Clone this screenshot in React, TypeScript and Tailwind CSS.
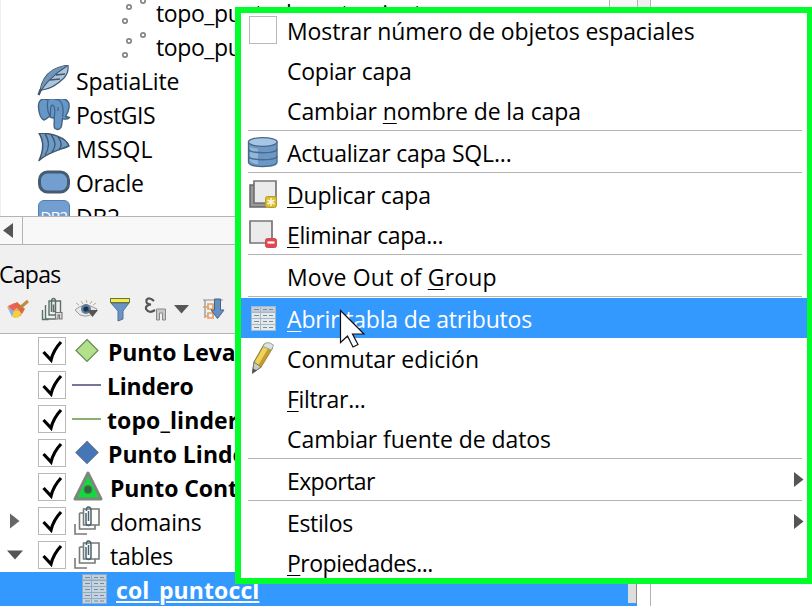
import React from "react";

const F = "font-['Open_Sans','Noto_Sans',sans-serif]";

function DotsIcon() {
  return (
    <svg className="h-[34px] w-[34px]" viewBox="0 0 34 34" fill="#fff" stroke="#858585" strokeWidth="1.7">
      <circle cx="9" cy="10" r="2.2" />
      <circle cx="23" cy="4" r="2.2" />
      <circle cx="5" cy="24" r="2.2" />
    </svg>
  );
}

function FeatherIcon() {
  return (
    <svg className="h-[34px] w-[34px]" viewBox="37 65 34 34">
      <path d="M40 91C41 83 45 75 53 70C58 67 63 66 68 65C68.500 70 68 74 64 78C58 84 50 89 42 90Z" fill="#a9c6e0" stroke="#46576b" strokeWidth="1.200" />
      <path d="M41 89C47 80 57 72 67 65.500C62 66 57 68 53 70C46 75 42 82 41 89Z" fill="#7095ba" />
      <path d="M39 95C42 86 54 74 67 66M50 80l10-1M56 75l9-1" fill="none" stroke="#42566c" strokeWidth="1.300" />
      <path d="M38.500 95L40.500 89.500" stroke="#42566c" strokeWidth="2.200" />
    </svg>
  );
}

function ElephantIcon() {
  return (
    <svg className="h-[34px] w-[34px]" viewBox="37 99 34 34" fill="#6597c9" stroke="#42617f" strokeWidth="1.400" strokeLinejoin="round">
      <path d="M47 99.500C41 98 38 101 38.500 107C39 114 41 119 44 120C46 120 48 117 50 116C50 118 53 118 54 118C55 122 53 127 55 128.500C58 130.500 61 129 61.500 126L62.500 118.500C65 119.500 68 119 69.500 117.500L65.500 116.500C69 111 70.500 104 67.500 101C65 98 60 98 57 99.500C54 98.500 50 98.500 47 99.500Z" />
      <path d="M48 100C47 105 47 111 50 116M51 106C54 103 56 109 54 118M58 99.500C63 102 64 111 62.500 117M58 107v4M50 116C51 114 50 110 51 106" fill="none" strokeWidth="1.200" />
    </svg>
  );
}

function SailIcon() {
  return (
    <svg className="h-[34px] w-[34px]" viewBox="37 133 34 34">
      <path d="M39 133C51 133 66 137 69 146C60 150 48 152 39 160.500C44 150 44 141 39 133Z" fill="#6d9bc7" stroke="#42566b" strokeWidth="1.500" strokeLinejoin="round" />
      <path d="M45 134C50 141 49 149 45 155M51 134.500C56 141 56 147 52 152M58 137C62 142 62 146 59 149.500" fill="none" stroke="#42566b" strokeWidth="1.300" />
    </svg>
  );
}

function OracleIcon() {
  return (
    <svg className="h-[34px] w-[34px]" viewBox="0 0 34 34">
      <rect x="2.500" y="5" width="29" height="20" rx="8" fill="#729fcf" stroke="#475b70" strokeWidth="3" />
    </svg>
  );
}

function Db2Icon() {
  return (
    <span className="mb-[4px] ml-[1px] mr-[1px] flex h-[32px] w-[32px] items-start justify-center rounded-[6px] border border-[#507fae] bg-[#729fcf] pt-[7px] font-['Open_Sans',sans-serif] text-[15px] leading-[16px] tracking-[-0.8px] text-white">
      DB2
    </span>
  );
}

function TreeRow({ icon, label, cls }: { icon: React.ReactNode; label: string; cls: string }) {
  return (
    <div className="flex h-[34px] shrink-0 items-center">
      <span className="ml-[37px] flex w-[39px] shrink-0">{icon}</span>
      <span className={`-mt-[2px] whitespace-nowrap leading-[34px] ${cls}`}>{label}</span>
    </div>
  );
}

function BrowserTree() {
  return (
    <div className="h-[216px] overflow-hidden border-l border-[#f0f0f0] bg-white">
      <div className="-mt-[3px] -ml-px flex flex-col text-[23px]">
        {["topo_punto_levantamiento", "topo_punto_lindero"].map((t) => (
          <div key={t} className="flex h-[34px] shrink-0 items-center">
            <span className="ml-[120px] flex w-[36px] shrink-0"><DotsIcon /></span>
            <span className="-mt-[2px] whitespace-nowrap tracking-[-0.4px] leading-[34px]">{t}</span>
          </div>
        ))}
        <TreeRow icon={<FeatherIcon />} label="SpatiaLite" cls="tracking-[-0.2px]" />
        <TreeRow icon={<ElephantIcon />} label="PostGIS" cls="tracking-[-0.5px]" />
        <TreeRow icon={<SailIcon />} label="MSSQL" cls="tracking-[0.2px]" />
        <TreeRow icon={<OracleIcon />} label="Oracle" cls="tracking-[-0.4px]" />
        <TreeRow icon={<Db2Icon />} label="DB2" cls="tracking-[-0.3px]" />
      </div>
    </div>
  );
}

function HScroll() {
  return (
    <div className="flex h-[29px] border-y border-[#b4b4b4] bg-[#f8f8f8]">
      <div className="flex w-[23px] items-center border-r border-[#b4b4b4]">
        <svg className="ml-[3px] h-[16px] w-[10px]" viewBox="0 0 10 16"><path d="M10 0v15L0 7.500z" fill="#555" /></svg>
      </div>
    </div>
  );
}

function Toolbar() {
  return (
    <svg className="block h-[43px] w-[235px]" viewBox="0 290 235 43" fill="none">
      <path d="M7 307L14 303L23 309L21 316L14 318Z" fill="#efab65" />
      <path d="M8 306L15 303L19 306L13 311Z" fill="#ee5f62" />
      <path d="M8 308L14 311L12 317Z" fill="#7fb4e6" />
      <path d="M14 311L22 311L18 318L12 317Z" fill="#f1d13d" />
      <path d="M14 304L17 302L25 309L22 314Z" fill="#d96a45" />
      <path d="M21 307L28 301" stroke="#bf8b40" strokeWidth="3" />
      <g stroke="#5d7067" strokeWidth="1.400">
        <path d="M49 301h11.500v14H49zM45.500 305v14h10M42.500 310v9.500h6" />
        <path d="M51.500 312v-10.500q0-3 2-3t2 3v10h-2v-7" strokeWidth="1.500" />
        <path d="M55.500 319v-6.500h6.500v6.500h-2.500v-4h-1.500v4z" fill="#ddd" stroke="#777" strokeWidth="1.100" />
      </g>
      <path d="M75 310Q84 301 97 309Q90 319 80 315Z" fill="#e4e8eb" stroke="#a69a90" />
      <path d="M76 303l3 2m2-4l2 3m3-4l1 3m5-2l-2 3m6-1l-3 2" stroke="#bba99a" />
      <circle cx="86" cy="309" r="5" fill="#607d97" />
      <circle cx="86" cy="309" r="2.600" fill="#17334f" />
      <path d="M87 310h11l-5.500 7z" fill="#555" />
      <path d="M111 303h18l-6 8v8l-5 2v-10z" fill="#6b94c4" stroke="#4c719c" />
      <rect x="110.500" y="298.500" width="19" height="4" fill="#f2ed42" stroke="#6e713b" />
      <path d="M154 301Q149 296.500 146.500 300Q145.500 304.500 151 304.500Q145 305.500 146 309Q149 314 155 310" stroke="#555" strokeWidth="2.200" />
      <path d="M156.500 320v-11h9v11h-3v-7h-3v7z" fill="#c8c8c8" stroke="#888" />
      <path d="M174 305h15l-7.500 8.500z" fill="#555" />
      <path d="M203 300h20M205 300v18" stroke="#858f9a" strokeWidth="1.200" />
      <path d="M203 307h5M208 304h5v5h-5zM204 316h4M208 313h5v5h-5z" stroke="#e6a061" strokeWidth="1.700" />
      <path d="M214.500 299h6v11h3.500l-6.500 8.500-6.500-8.500h3.500z" fill="#648fbe" stroke="#41648d" />
    </svg>
  );
}

function Check() {
  return (
    <span className="flex h-[28px] w-[28px] shrink-0 border border-[#b9b9b9] bg-white">
      <svg className="h-[26px] w-[26px]" viewBox="0 0 26 26"><path d="M4.500 14L12 22Q14.500 12 22 4" fill="none" stroke="#000" strokeWidth="3.200" /></svg>
    </span>
  );
}

function GroupIcon() {
  return (
    <svg className="h-[34px] w-[34px]" viewBox="73 504 34 34" fill="none" stroke="#747b78" strokeWidth="1.600">
      <path d="M83.500 509H99v16H83.500zM79.500 513v16H95v-4M79.500 513h4M75 524v10h12" />
      <path d="M86 513v10q0 2.500 2.500 2.500t2.500-2.500v-12q0-4-2.500-4T86.500 511M88.500 511v10" stroke="#49636c" strokeWidth="1.500" />
    </svg>
  );
}

function TableIcon({ sel }: { sel?: boolean }) {
  return (
    <svg className="block h-[30px] w-[25px] shrink-0" viewBox="0 0 25 30">
      <rect x="0" y="0" width="25" height="30" fill={sel ? "#8fabc6" : "#a3b9cc"} />
      <path d="M1 1h8v4.500H1zM10 1h14v4.500H10z" fill="#c3d0dc" />
      <path d="M1 7h8v5H1zM10 7h14v5H10zM1 13h8v5H1zM10 13h14v5H10zM1 19h8v5H1zM10 19h14v5H10zM1 25h8v4H1zM10 25h14v4H10z" fill={sel ? "#c6d4df" : "#e6e9eb"} />
      <path d="M3 3.500h5M12 3.500h4M18 3.500h4M3 9.500h5M12 9.500h4M18 9.500h4M3 15.500h5M12 15.500h4M18 15.500h4M3 21.500h5M12 21.500h4M18 21.500h4M3 27h5M12 27h4M18 27h4" stroke="#7d8b98" strokeWidth="1.100" />
    </svg>
  );
}

function Diamond({ fill, stroke }: { fill: string; stroke: string }) {
  return (
    <svg className="h-[34px] w-[34px]" viewBox="0 0 34 34"><path d="M14 5.500L25 16.500L14 27.500L3 16.500Z" fill={fill} stroke={stroke} strokeWidth="1.200" /></svg>
  );
}

function Line({ color }: { color: string }) {
  return <span className={`mb-[1px] ml-[-1px] h-[2px] w-[29px] ${color}`} />;
}

function LayerRow({ arrow, icon, label, cls }: { arrow?: "right" | "down"; icon: React.ReactNode; label: string; cls: string }) {
  return (
    <div className="flex h-[34px] shrink-0 items-center">
      <span className="flex w-[38px] shrink-0 pl-[7px]">
        {arrow === "right" && <svg className="ml-[3px] h-[16px] w-[10px]" viewBox="0 0 10 16"><path d="M0 0.500v15L9.500 8z" fill="#666" /></svg>}
        {arrow === "down" && <svg className="h-[10px] w-[16px]" viewBox="0 0 16 10"><path d="M0 0.500h16L8 9.500z" fill="#555" /></svg>}
      </span>
      <Check />
      <span className="ml-[7px] flex w-[34px] shrink-0 items-center">{icon}</span>
      <span className={`mt-[2px] whitespace-nowrap leading-[34px] ${cls}`}>{label}</span>
    </div>
  );
}

function Layers() {
  return (
    <div className="flex h-[273px] flex-col overflow-hidden border-t border-[#b4b4b4] bg-white text-[23px]">
      <LayerRow icon={<Diamond fill="#b4df8b" stroke="#668a57" />} label="Punto Levantamiento" cls="ml-[1px] font-bold tracking-[-0.1px]" />
      <LayerRow icon={<Line color="bg-[#77759a]" />} label="Lindero" cls="font-bold tracking-[-0.2px]" />
      <LayerRow icon={<Line color="bg-[#8caf70]" />} label="topo_lindero" cls="font-bold tracking-[0.1px]" />
      <LayerRow icon={<Diamond fill="#4476b8" stroke="#526f98" />} label="Punto Lindero" cls="ml-[1px] font-bold" />
      <LayerRow
        icon={<svg className="h-[34px] w-[34px]" viewBox="0 0 34 34"><path d="M15 3L28 29H2Z" fill="#10db3b" stroke="#7f857f" strokeWidth="3" strokeLinejoin="round" /><circle cx="15" cy="19.500" r="4" fill="#296b37" stroke="#5a7461" /></svg>}
        label="Punto Control"
        cls="ml-[3px] font-bold tracking-[-0.1px]"
      />
      <LayerRow arrow="right" icon={<GroupIcon />} label="domains" cls="ml-[3px] tracking-[-0.2px]" />
      <LayerRow arrow="down" icon={<GroupIcon />} label="tables" cls="ml-[3px] tracking-[-0.3px]" />
      <div className="mr-[13px] flex h-[34px] shrink-0 items-center bg-[#3399ff]">
        <span className="ml-[82px] flex w-[34px]"><TableIcon sel /></span>
        <span className="mt-[2px] whitespace-nowrap font-bold leading-[34px] tracking-[0.1px] text-white underline decoration-2 underline-offset-[2px]">col_puntoccl</span>
      </div>
    </div>
  );
}

function DbIcon() {
  return (
    <svg className="h-[40px] w-[32px]" viewBox="247 132 32 40" stroke="#4b6885" strokeWidth="1.300">
      <path d="M248.500 142v20c0 6 28.500 6 28.500 0v-20z" fill="#6b98c7" />
      <path d="M250 147v14c2 2 5 3 8 3v-15z" fill="#91b6dc" stroke="none" />
      <ellipse cx="262.750" cy="142" rx="14.250" ry="4.300" fill="#a5c6e7" />
      <path d="M248.500 149c0 5 28.500 5 28.500 0M248.500 156c0 5 28.500 5 28.500 0" fill="none" />
    </svg>
  );
}

function DuplicateIcon() {
  return (
    <svg className="h-[40px] w-[32px]" viewBox="247 174 32 40">
      <path d="M250 185h4v18h12v4h-16z" fill="#999" stroke="#666" strokeWidth="1.500" />
      <path d="M254 181h22v22h-22z" fill="#ebebeb" stroke="#777" strokeWidth="1.700" />
      <rect x="265.500" y="196.500" width="11" height="11" rx="2" fill="#d9bd37" stroke="#b89c24" />
      <path d="M271 198v8M267.500 200l7 4M274.500 200l-7 4" stroke="#fff8cf" strokeWidth="1.500" />
    </svg>
  );
}

function RemoveIcon() {
  return (
    <svg className="h-[40px] w-[32px]" viewBox="247 214 32 40">
      <path d="M250 221h22v22h-22z" fill="#ebebeb" stroke="#777" strokeWidth="1.700" />
      <rect x="265.500" y="238.500" width="11" height="9" rx="2" fill="#e4484d" stroke="#c94c50" />
      <path d="M267.500 242.500h7" stroke="#fff" strokeWidth="2.200" />
    </svg>
  );
}

function PencilIcon() {
  return (
    <svg className="h-[40px] w-[32px]" viewBox="247 338 32 40" strokeLinejoin="round">
      <path d="M264 344.500L272.500 348L261 367L252.500 373L254 362Z" fill="#edd35c" stroke="#8b793c" strokeWidth="1.100" />
      <path d="M269 347L272.500 348L261 367L258 365.500Z" fill="#c49c2c" />
      <path d="M265 343Q270 341.500 273.500 345L271.500 350L263 346.500Z" fill="#dbe3db" stroke="#9aa69a" />
      <path d="M254 362L261 367L252.500 373Z" fill="#cfc9ba" stroke="#777" />
      <path d="M253 368.500L257 370.500L252 373.500Z" fill="#555" />
    </svg>
  );
}

type Item = { pre?: string; u?: string; post: string; icon?: React.ReactNode; cls: string; hot?: boolean; sub?: boolean; sep?: boolean };

const items: Item[] = [
  { post: "Mostrar número de objetos espaciales", cls: "tracking-[-0.11px]", icon: <span className="ml-[2px] h-[28px] w-[28px] border border-[#b9b9b9]" /> },
  { post: "Copiar capa", cls: "tracking-[-0.23px]" },
  { pre: "Cambiar ", u: "n", post: "ombre de la capa", cls: "tracking-[-0.1px]", sep: true },
  { post: "Actualizar capa SQL...", cls: "tracking-[-0.18px]", icon: <DbIcon />, sep: true },
  { u: "D", post: "uplicar capa", cls: "tracking-[-0.2px]", icon: <DuplicateIcon /> },
  { u: "E", post: "liminar capa...", cls: "tracking-[-0.4px]", icon: <RemoveIcon />, sep: true },
  { pre: "Move Out of ", u: "G", post: "roup", cls: "tracking-[0.18px]", sep: true },
  { u: "A", post: "brir tabla de atributos", cls: "tracking-[-0.17px]", icon: <span className="ml-[4px] flex h-[25px] overflow-hidden"><TableIcon /></span>, hot: true },
  { post: "Conmutar edición", cls: "tracking-[0.02px]", icon: <PencilIcon /> },
  { u: "F", post: "iltrar...", cls: "tracking-[-0.3px]" },
  { post: "Cambiar fuente de datos", cls: "tracking-[-0.06px]", sep: true },
  { post: "Exportar", cls: "tracking-[-0.6px]", sub: true, sep: true },
  { post: "Estilos", cls: "tracking-[-0.35px]", sub: true },
  { u: "P", post: "ropiedades...", cls: "tracking-[-0.5px]" },
];

function ContextMenu() {
  return (
    <div className="absolute left-[235px] top-[7px] h-[577px] w-[577px] overflow-hidden border-[6px] border-r-[5px] border-[#00ff2a] bg-white text-[23px]">
      <div className="-mt-[3px] flex flex-col">
        {items.map((it) => (
          <React.Fragment key={it.post}>
            <div className={`flex h-[40px] shrink-0 items-center pl-[6px] pr-[3px] ${it.hot ? "bg-[#3399ff] text-white" : ""}`}>
              <span className="flex w-[40px] shrink-0 items-center">{it.icon}</span>
              <span className={`relative top-[1px] whitespace-nowrap leading-[40px] ${it.cls}`}>
                {it.pre}
                {it.u && <span className="underline decoration-1 underline-offset-[3px]">{it.u}</span>}
                {it.post}
              </span>
              {it.sub && <svg className="ml-auto h-[16px] w-[10px]" viewBox="0 0 10 16"><path d="M0 0v15L9.500 7.500z" fill="#555" /></svg>}
            </div>
            {it.sep && <div className="ml-[7px] mr-[5px] h-[2px] shrink-0 border-t border-[#b4b4b4]" />}
          </React.Fragment>
        ))}
      </div>
    </div>
  );
}

export default function App() {
  return (
    <div className={`relative h-[606px] w-[812px] overflow-hidden bg-white text-black ${F}`}>
      <div className="flex h-full w-[651px] flex-col border-r border-[#b4b4b4] bg-[#f0f0f0]">
        <div className="flex h-[216px]">
          <div className="w-[609px]"><BrowserTree /></div>
          <div className="w-[29px] border-x border-[#b4b4b4] bg-[#f8f8f8]" />
        </div>
        <HScroll />
        <div className="h-[45px] pt-[11px] text-[23px] leading-[36px] tracking-[-0.7px]">
          <span className="-ml-[1px]">Capas</span>
        </div>
        <Toolbar />
        <div className="relative">
          <Layers />
          <div className="absolute right-[13px] bottom-[3px] h-[24px] w-[9px] border-r border-[#888] bg-[#ddd]" />
        </div>
      </div>
      <ContextMenu />
      <svg className="absolute left-[339px] top-[309px] h-[40px] w-[28px]" viewBox="339 309 28 40">
        <path d="M340.500 310.500V342.500L347.500 336L353 347L358 344.500L352.500 334H364Z" fill="#fff" stroke="#111" strokeWidth="1.200" />
      </svg>
    </div>
  );
}
